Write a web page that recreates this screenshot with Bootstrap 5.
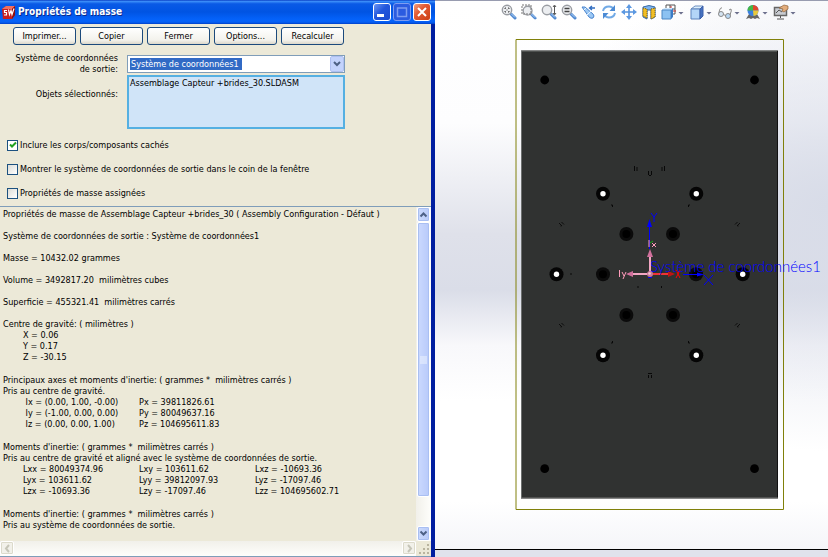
<!DOCTYPE html>
<html lang="fr">
<head>
<meta charset="utf-8">
<meta name="viewport" content="width=device-width, initial-scale=1">
<title>Propriétés de masse</title>
<link href="https://cdn.jsdelivr.net/npm/bootstrap@5.3.0/dist/css/bootstrap.min.css" rel="stylesheet">
<style>
:root { --face: #ece9d8; --edge: #7f9db9; }
body { font-family: "DejaVu Sans Condensed", "DejaVu Sans", sans-serif; font-size: 9px; line-height: 11px; color: #000; background: #fff; }
.workspace { display: grid; grid-template-columns: 435fr 393fr; min-height: 100vh; }
.dialog-win { background: var(--face); border-style: solid; border-width: 0 4px 0 0; border-image: linear-gradient(90deg, #0a50e8 0 50%, #001ea0) 1; min-width: 0; }
.title-strip { height: 24px; padding: 0 4px 0 1px; gap: 2px; margin-right: -4px; background: linear-gradient(#0a3fc4 0, #3a8cf8 6%, #0a5ae6 16%, #0054e3 50%, #0462fa 80%, #0560f5 92%, #0040c8 100%); }
.title-strip h1 { font-size: 10px; line-height: 16px; font-weight: 700; color: #fff; text-shadow: 1px 1px #0a2a8c; }
.win-btn { width: 18px; height: 18px; padding: 0; border: 1px solid #fff; border-radius: 3px; background: linear-gradient(135deg, #6b95f4, #2257dc 45%, #1c4cd0); }
.win-btn svg { display: block; }
.win-btn.faded { border-color: #7d9cf0; background: #2b5be0; }
.win-btn.shut { background: linear-gradient(135deg, #f0a080, #e25a34 40%, #cc3e14); }
.actions { padding: 3px 0 0 13px; gap: 4px; }
.xp-btn { width: 63px; height: 18px; padding: 0; border: 1px solid #1c4a7c; border-radius: 3px; background: linear-gradient(#fff, #f3f2ec 75%, #dcd8cb); color: #000; font-size: 9px; line-height: 11px; }
.fields { display: grid; grid-template-columns: 118px 218px; column-gap: 9px; padding-top: 8px; }
.fields label { text-align: right; }
.fields .lower { padding-top: 14px; }
.combo { align-self: center; }
.combo select { display: block; width: 100%; height: 18px; border: 1px solid var(--edge); border-radius: 0; padding: 0 3px; appearance: none; color: #fff; font-size: 9px; line-height: 11px; background: linear-gradient(#316ac5, #316ac5) 2px 2px / 112px 12px no-repeat #fff; }
.combo svg { position: absolute; right: 1px; top: 1px; pointer-events: none; }
.picked { display: block; width: 100%; height: 54px; resize: none; border: 2px solid #55b0e2; background: #d0e4f8; padding: 1px; overflow: hidden; font-size: 9px; line-height: 11px; color: #000; }
.checks { padding: 10px 7px 7px; gap: 12px; }
.checks .form-check { min-height: 12px; gap: 2px; }
.checks .form-check .form-check-input { float: none; margin: 0; width: 11px; height: 11px; border: 1px solid #1c5180; border-radius: 0; background: linear-gradient(135deg, #dcdcd7, #fff); }
.checks .form-check .form-check-input:checked { background: #fff; }
.tick { position: absolute; left: 2px; top: 2px; pointer-events: none; }
.report-box { border-top: 1px solid var(--edge); border-bottom: 1px solid var(--edge); display: grid; grid-template-columns: 1fr 15px; grid-template-rows: 1fr 15px; }
.report { padding: 2px 3px 0; overflow: hidden; }
.report p, .report td, .report .indent { white-space: pre; }
.report p { margin: 0 0 11px; }
.report section { margin-bottom: 12px; }
.report section:last-child { margin-bottom: 0; }
.report section p { margin: 0; }
.indent { padding-left: 20px; }
.report td { padding: 0; width: 116px; }
.rail { background: linear-gradient(90deg, #f1f0ea, #fefefb); }
.rail.flat { background: linear-gradient(#f1f0ea, #fefefb); }
.rail button, .rail .thumb { border: 1px solid #fff; border-radius: 2px; background: linear-gradient(90deg, #cbdafd, #b9cbf8); box-shadow: inset 0 0 0 1px #a9bff2; width: 13px; height: 15px; padding: 0; margin: 0 1px; }
.rail .thumb { flex: 275 0 0; background: linear-gradient(90deg, #cbd9fe, #b8cafa); }
.rail .slack { flex: 29 0 0; }
.rail.flat button { background: #f2f1ea; box-shadow: inset 0 0 0 1px #dcdacb; width: 14px; height: 14px; margin: 0; }
.rail svg, .tool svg { display: block; margin: auto; }
.view-pane { min-width: 0; border-top: 1px solid #989cb0; background: radial-gradient(ellipse 75% 44% at 100% 37%, #d8dce8, #d8dce800), linear-gradient(#fff 0, #fdfdfe 22%, #dfe1ea 42%, #dadde8 52%, #f8f8fb 62%, #fff 72%, #fff 90%, #f3f4f8 100%); }
.tools { height: 25px; padding: 3px 0 0 66px; gap: 4px; }
.tool { width: 16px; height: 16px; padding: 0; border: 0; background: none; }
.tool.drop { width: 8px; }
.model { flex: 1 1 0; min-height: 0; width: 100%; }
.base-strip { height: 8px; border-top: 1px solid #000; background: #e0e3ec; }
</style>
<script src="https://cdn.jsdelivr.net/npm/bootstrap@5.3.0/dist/js/bootstrap.bundle.min.js"></script>
</head>
<body>
<main class="workspace">
  <section class="dialog-win d-flex flex-column" aria-label="Propriétés de masse">
    <header class="title-strip d-flex align-items-center">
      <svg width="15" height="15" viewBox="0 0 15 15" aria-hidden="true">
        <path d="M1 4 5 1h9v9l-3 4H2z" fill="#c81e1e"/><path d="M1 4 5 1h9l-3 3z" fill="#f07060"/><path d="M11 4l3-3v9l-3 4z" fill="#8e0e0e"/>
        <path d="M6 5.500H3.500v2H5.500v2.500H3M7.500 4.500l1 5 1.500-4 1 4 2-6" fill="none" stroke="#fff" stroke-width="1.200"/>
      </svg>
      <h1 class="m-0 flex-grow-1">Propriétés de masse</h1>
      <button class="win-btn" aria-label="Réduire"><svg width="16" height="16"><path d="M3 10h7v3H3z" fill="#fff"/></svg></button>
      <button class="win-btn faded" aria-label="Agrandir"><svg width="16" height="16"><path d="M3.500 4v8.500h9V4zM3 4h10" fill="none" stroke="#7d9cf0" stroke-width="1.500"/></svg></button>
      <button class="win-btn shut" aria-label="Fermer la fenêtre"><svg width="16" height="16"><path d="M4 4l8 8M12 4l-8 8" stroke="#fff" stroke-width="2"/></svg></button>
    </header>

    <div class="actions d-flex">
      <button class="xp-btn">Imprimer...</button>
      <button class="xp-btn">Copier</button>
      <button class="xp-btn">Fermer</button>
      <button class="xp-btn">Options...</button>
      <button class="xp-btn">Recalculer</button>
    </div>

    <div class="fields">
      <label for="csys">Système de coordonnées<br>de sortie:</label>
      <div class="combo position-relative">
        <select id="csys"><option>Système de coordonnées1</option></select>
        <svg width="14" height="16" viewBox="0 0 14 16" aria-hidden="true"><rect x=".5" y=".5" width="13" height="15" rx="1.500" fill="#c3d3fc" stroke="#aebff0"/><path d="M4 6l3 3 3-3" fill="none" stroke="#4d6185" stroke-width="2"/></svg>
      </div>
      <label for="picked" class="lower">Objets sélectionnés:</label>
      <textarea id="picked" class="picked" readonly>Assemblage Capteur +brides_30.SLDASM</textarea>
    </div>

    <div class="checks d-flex flex-column">
      <div class="form-check d-flex align-items-center m-0 p-0 position-relative">
        <input class="form-check-input" type="checkbox" id="hidden-bodies" checked><label for="hidden-bodies">Inclure les corps/composants cachés</label>
        <svg class="tick" width="8" height="8" viewBox="0 0 8 8" aria-hidden="true"><path d="M1 3.500 3 5.500 7 1.500" fill="none" stroke="#21a121" stroke-width="2"/></svg>
      </div>
      <div class="form-check d-flex align-items-center m-0 p-0">
        <input class="form-check-input" type="checkbox" id="corner"><label for="corner">Montrer le système de coordonnées de sortie dans le coin de la fenêtre</label>
      </div>
      <div class="form-check d-flex align-items-center m-0 p-0">
        <input class="form-check-input" type="checkbox" id="assigned"><label for="assigned">Propriétés de masse assignées</label>
      </div>
    </div>

    <div class="report-box flex-grow-1">
      <div class="report">
        <p>Propriétés de masse de Assemblage Capteur +brides_30 ( Assembly Configuration - Défaut )</p>
        <p>Système de coordonnées de sortie : Système de coordonnées1</p>
        <p>Masse = 10432.02 grammes</p>
        <p>Volume = 3492817.20  milimètres cubes</p>
        <p>Superficie = 455321.41  milimètres carrés</p>
        <section>
          <p>Centre de gravité: ( milimètres )</p>
          <div class="indent">X = 0.06<br>Y = 0.17<br>Z = -30.15</div>
        </section>
        <section>
          <p>Principaux axes et moments d'inertie: ( grammes *  milimètres carrés )</p>
          <p>Pris au centre de gravité.</p>
          <div class="indent"><table><tr><td> Ix = (0.00, 1.00, -0.00)</td><td>Px = 39811826.61</td></tr><tr><td> Iy = (-1.00, 0.00, 0.00)</td><td>Py = 80049637.16</td></tr><tr><td> Iz = (0.00, 0.00, 1.00)</td><td>Pz = 104695611.83</td></tr></table></div>
        </section>
        <section>
          <p>Moments d'inertie: ( grammes *  milimètres carrés )</p>
          <p>Pris au centre de gravité et aligné avec le système de coordonnées de sortie.</p>
          <div class="indent"><table><tr><td>Lxx = 80049374.96</td><td>Lxy = 103611.62</td><td>Lxz = -10693.36</td></tr><tr><td>Lyx = 103611.62</td><td>Lyy = 39812097.93</td><td>Lyz = -17097.46</td></tr><tr><td>Lzx = -10693.36</td><td>Lzy = -17097.46</td><td>Lzz = 104695602.71</td></tr></table></div>
        </section>
        <section>
          <p>Moments d'inertie: ( grammes *  milimètres carrés )</p>
          <p>Pris au système de coordonnées de sortie.</p>
        </section>
      </div>
      <div class="rail d-flex flex-column">
        <button aria-label="Défiler vers le haut"><svg width="9" height="9"><path d="M1.500 6.500l3-3 3 3" fill="none" stroke="#4d6185" stroke-width="2"/></svg></button>
        <div class="thumb d-flex"><svg width="7" height="8"><path d="M0 1h7M0 3h7M0 5h7M0 7h7" stroke="#eef4fe"/></svg></div>
        <div class="slack"></div>
        <button aria-label="Défiler vers le bas"><svg width="9" height="9"><path d="M1.500 2.500l3 3 3-3" fill="none" stroke="#4d6185" stroke-width="2"/></svg></button>
      </div>
      <div class="rail flat d-flex justify-content-between">
        <button aria-label="Défiler à gauche"><svg width="9" height="9"><path d="M6 1L3 4.500 6 8" fill="none" stroke="#c6c5b8" stroke-width="2"/></svg></button>
        <button aria-label="Défiler à droite"><svg width="9" height="9"><path d="M3 1l3 3.500L3 8" fill="none" stroke="#c6c5b8" stroke-width="2"/></svg></button>
      </div>
      <svg width="15" height="15" aria-hidden="true"><path d="M11 3h2v2h-2zM7 7h2v2H7zM11 7h2v2h-2zM3 11h2v2H3zM7 11h2v2H7zM11 11h2v2h-2z" fill="#b9b49f"/></svg>
    </div>
  </section>

  <section class="view-pane d-flex flex-column" aria-label="Zone graphique">
    <svg width="0" height="0" class="position-absolute" aria-hidden="true">
      <symbol id="lens" viewBox="0 0 16 16"><path d="M10 10l4 4" stroke="#4f88d0" stroke-width="3" stroke-linecap="round"/><path d="M10 9.500l4 4" stroke="#b4d4f6"/><circle cx="6" cy="6" r="4.700" fill="#eceef1" stroke="#9a9da3" stroke-width="1.400"/></symbol>
      <symbol id="chev" viewBox="0 0 8 16"><path d="M1.500 8h5L4 10.500z" fill="#6b6f8c"/></symbol>
    </svg>
    <div class="tools d-flex" role="toolbar" aria-label="Affichage">
      <button class="tool" aria-label="Zoom au mieux"><svg width="16" height="16"><use href="#lens" width="16" height="16"/><path d="M4 5V4h1M7 4h1v1M8 7v1H7M5 8H4V7M6 5.500v1" fill="none" stroke="#444"/></svg></button>
      <button class="tool" aria-label="Zoom fenêtre"><svg width="16" height="16"><use href="#lens" x="1" y="1" width="15" height="15"/><path d="M1 1h9v9H1z" fill="none" stroke="#777" stroke-dasharray="2 1"/></svg></button>
      <button class="tool" aria-label="Zoom avant arrière"><svg width="16" height="16"><use href="#lens" width="16" height="16"/><path d="M13.500 2v8M12 3l1.500-2L15 3M12 9l1.500 2L15 9" fill="none" stroke="#555"/></svg></button>
      <button class="tool" aria-label="Zoom sur la sélection"><svg width="16" height="16"><use href="#lens" width="16" height="16"/><path d="M3.500 4.500h5M3.500 7.500h5" stroke="#444" stroke-width="1.500"/></svg></button>
      <button class="tool" aria-label="Vue précédente"><svg width="16" height="16"><path d="M1 3l3 0 8 7q2 2 0 4-2 1-4-1z" fill="#9cc8f4" stroke="#4a84cd"/><path d="M6 11l4-4M3 6l2-2" stroke="#e6f2ff"/><path d="M14 4H9M11 2L8.500 4 11 6" fill="none" stroke="#2f6cc0" stroke-width="1.300"/></svg></button>
      <button class="tool" aria-label="Rotation"><svg width="16" height="16"><path d="M2 7q1-4.500 6-4.500 3 0 4.500 2.500M14 9q-1 4.500-6 4.500-3 0-4.500-2.500" fill="none" stroke="#72aae6" stroke-width="2"/><path d="M14 1v6H8.500zM2 15V9h5.500z" fill="#4b8ad4"/></svg></button>
      <button class="tool" aria-label="Translation"><svg width="16" height="16"><path d="M8 2v12M2 8h12" stroke="#5592dc" stroke-width="1.600"/><path d="M8 0l3 4H5zM8 16l3-4H5zM0 8l4-3v6zM16 8l-4-3v6z" fill="#5b98e2"/></svg></button>
      <button class="tool" aria-label="Vue en coupe"><svg width="16" height="16"><path d="M2 3q6-3 12 0v10l-4 2V6H6v9l-4-2z" fill="#7db4ee" stroke="#386ba8"/><path d="M2 4l4 1v9l-4-2zM10 5l4-1v9l-4 2z" fill="#f2bf26" stroke="#7a5c08" stroke-dasharray="1 1"/></svg></button>
      <div class="d-flex">
        <button class="tool" aria-label="Orientation des vues"><svg width="16" height="16"><path d="M5 5V1h9v9h-3M9 1v4M14 5h-3" fill="#fff" stroke="#555"/><path d="M10 2v3M12 7h3" stroke="#c33"/><path d="M1 6l2-2h9l-2 2z" fill="#d0e8fc"/><path d="M1 6h9v9H1z" fill="#8cc2f2" stroke="#4b86c4"/><path d="M10 6l2-2v9l-2 2z" fill="#3b7cc6"/></svg></button>
        <button class="tool drop" aria-label="Autres orientations"><svg width="8" height="16"><use href="#chev" width="8" height="16"/></svg></button>
      </div>
      <div class="d-flex">
        <button class="tool" aria-label="Style d'affichage"><svg width="16" height="16"><path d="M2 5l4-3h8l-3 3z" fill="#dceefc" stroke="#6e8fc0"/><path d="M2 5h9v10H2z" fill="#b4d6f8" stroke="#5c84bd"/><path d="M11 5l3-3v10l-3 3z" fill="#4571c0" stroke="#3c60aa"/></svg></button>
        <button class="tool drop" aria-label="Autres styles"><svg width="8" height="16"><use href="#chev" width="8" height="16"/></svg></button>
      </div>
      <div class="d-flex">
        <button class="tool" aria-label="Cacher ou montrer"><svg width="16" height="16"><circle cx="4" cy="10" r="2.500" fill="#d5e4f2" stroke="#888"/><circle cx="11" cy="12" r="2.500" fill="#b8d8f4" stroke="#888"/><path d="M6.500 10.500l2 1M2 8.500Q3 3 5 4M13 11q2-5 1-6l-2 1" fill="none" stroke="#888"/></svg></button>
        <button class="tool drop" aria-label="Autres éléments"><svg width="8" height="16"><use href="#chev" width="8" height="16"/></svg></button>
      </div>
      <div class="d-flex">
        <button class="tool" aria-label="Appliquer une scène"><svg width="16" height="16"><path d="M1 15l3-5h8l3 5-3-1-2 1-2-1-2 1-2-1z" fill="#666"/><circle cx="8" cy="6.500" r="5.500" fill="#3c80e0"/><path d="M8 6.500V1a5.500 5.500 0 0 0-5.500 5.500z" fill="#45b845"/><path d="M8 6.500V1a5.500 5.500 0 0 1 5.500 5.500z" fill="#e0482e"/><path d="M8 6.500h5.500a5.500 5.500 0 0 1-5 5.500z" fill="#e9c93a"/></svg></button>
        <button class="tool drop" aria-label="Autres scènes"><svg width="8" height="16"><use href="#chev" width="8" height="16"/></svg></button>
      </div>
      <div class="d-flex">
        <button class="tool" aria-label="Paramètres de vue"><svg width="16" height="16"><path d="M1.500 3.500h12v8h-12z" fill="#c9ccd2" stroke="#666" stroke-width="1.500"/><path d="M7.500 12v2M4 15h7" stroke="#555"/><path d="M3 9l3-3 3 2" fill="none" stroke="#555"/><path d="M6 4l5-3 4 1v3l-4 3-2-1 1-2z" fill="#e3ad7c" stroke="#8d6238" stroke-width=".7"/></svg></button>
        <button class="tool drop" aria-label="Autres paramètres"><svg width="8" height="16"><use href="#chev" width="8" height="16"/></svg></button>
      </div>
    </div>
    <svg class="model" viewBox="435 26 393 523" role="img" aria-label="Assemblage, vue de face">
      <defs>
        <g id="thru"><circle r="7" fill="#050505"/><circle r="2.700" fill="#fff"/></g>
        <g id="blind"><circle r="7" fill="#0b0b0b"/><circle r="4" fill="#000"/></g>
        <path id="fleck" d="M-2.500-1l3 3M0-2l2.500 2.500M-1 2h1" fill="none" stroke="#0c0c0c"/>
      </defs>
      <path d="M516 39.500h267.500v470H516z" fill="none" stroke="#80800a"/>
      <rect x="521" y="50.500" width="257" height="448" fill="#303231"/>
      <path d="M521.500 498V51H778" fill="none" stroke="#6d706f"/><path d="M777.500 51v447" stroke="#111"/><path d="M521 498h257" stroke="#777"/>
      <g><circle cx="544.700" cy="80" r="4.400"/><circle cx="754.500" cy="80" r="4.400"/><circle cx="544.700" cy="468.700" r="4.400"/><circle cx="754.500" cy="468.700" r="4.400"/></g>
      <use href="#thru" x="603" y="193.700"/><use href="#thru" x="696.300" y="193.700"/><use href="#thru" x="556.500" y="274.300"/><use href="#thru" x="742.700" y="274.300"/><use href="#thru" x="603" y="355.300"/><use href="#thru" x="696.300" y="355.300"/>
      <use href="#blind" x="626.400" y="234"/><use href="#blind" x="673" y="234"/><use href="#blind" x="603" y="274.300"/><use href="#blind" x="696" y="274.300"/><use href="#blind" x="626.400" y="315"/><use href="#blind" x="673" y="315"/>
      <use href="#fleck" x="561.500" y="224"/><use href="#fleck" x="561.500" y="325"/>
      <g transform="scale(-1 1)"><use href="#fleck" x="-737.500" y="224"/><use href="#fleck" x="-737.500" y="325"/></g>
      <path d="M634.500 166v5M637 167v4M662 167v4M664.500 166v5M648.500 171v4M651.500 171v4M649 175.500h2M648.500 375v3M651.500 375v3M648 373.500h4M611 205h1.500v2M690 205h-1.500v2M611 343h1.500v-2M690 343h-1.500v-2M570 274h2M736 274h2M638 286v2M661.500 286v2" fill="none" stroke="#080808"/>
      <path d="M649.500 249v-24" stroke="#00f"/><path d="M649.500 219l-2.500 8h5z" fill="#00f"/>
      <path d="M651 213l3 4v5M657 213l-3 4" fill="none" stroke="#00f"/>
      <path d="M683 274.500h16" stroke="#00f"/><path d="M704 274.500l-7-2v4z" fill="#00f"/><path d="M704 275l9 10M713 275l-9 10" stroke="#00f"/>
      <path d="M650 274h-22M650 274v-19" stroke="#f2a6c2" stroke-width="2"/><path d="M626 274l7-3v6zM650 249l-3 8h6z" fill="#d0709c"/>
      <path d="M653 274h20" stroke="#f03434" stroke-width="2"/><path d="M675 274l-7-3v6z" fill="#c01414"/><path d="M676 270l4 8M680 270l-4 8" stroke="#f00"/>
      <path d="M649 240v7M652 243l4 4M656 243l-4 4M619.500 270v7M622 272l2 4M626 272l-3 7" fill="none" stroke="#ff9dbb"/><path d="M650 243l3-2" stroke="#1a1"/>
      <circle cx="650" cy="274" r="3" fill="#c87898"/><circle cx="649.500" cy="273.500" r="1.300" fill="#f4c4d4"/><path d="M648 277.500h4" stroke="#00f"/>
      <text x="650" y="272" fill="#00f" font-family="Lato, sans-serif" font-weight="300" font-size="15">Système de coordonnées1</text>
    </svg>
    <div class="base-strip"></div>
  </section>
</main>
</body>
</html>
